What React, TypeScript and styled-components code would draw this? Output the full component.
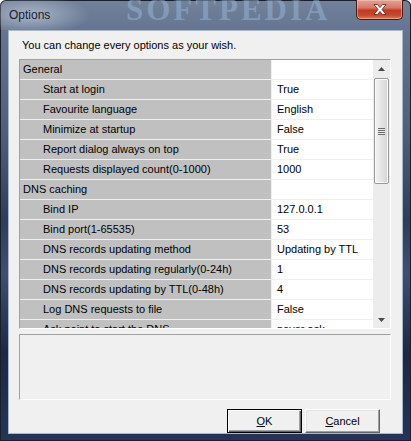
import React from "react";
import styled, { createGlobalStyle } from "styled-components";

type Opt = {
  name: string;
  value?: string;
  group?: boolean;
};

const options: Opt[] = [
  { name: "General", group: true },
  { name: "Start at login", value: "True" },
  { name: "Favourite language", value: "English" },
  { name: "Minimize at startup", value: "False" },
  { name: "Report dialog always on top", value: "True" },
  { name: "Requests displayed count(0-1000)", value: "1000" },
  { name: "DNS caching", group: true },
  { name: "Bind IP", value: "127.0.0.1" },
  { name: "Bind port(1-65535)", value: "53" },
  { name: "DNS records updating method", value: "Updating by TTL" },
  { name: "DNS records updating regularly(0-24h)", value: "1" },
  { name: "DNS records updating by TTL(0-48h)", value: "4" },
  { name: "Log DNS requests to file", value: "False" },
  { name: "Ask point to start the DNS", value: "never ask" },
];

const GlobalStyle = createGlobalStyle`
  html, body {
    margin: 0;
    padding: 0;
    background: #ffffff;
  }
  body {
    font-family: "Liberation Sans", Arial, sans-serif;
    font-size: 11px;
    color: #000;
  }
`;

const Window = styled.div`
  width: 411px;
  height: 441px;
  box-sizing: border-box;
  display: flex;
  flex-direction: column;
  border-radius: 6px 6px 0 0;
  overflow: hidden;
  background: linear-gradient(
    180deg,
    #72829a 0%,
    #637390 8%,
    #4f5f7b 30%,
    #2e3d5c 50%,
    #3d4f73 62%,
    #1c2846 80%,
    #24345a 100%
  );
  box-shadow: inset 0 0 0 1px #1a1f2a;
`;

const TitleBar = styled.div`
  position: relative;
  height: 30px;
  flex: none;
  display: flex;
  justify-content: space-between;
  align-items: flex-start;
  padding: 0 8px 0 9px;
  background: radial-gradient(
    ellipse 60px 20px at 30px 15px,
    rgba(220, 228, 240, 0.55),
    rgba(220, 228, 240, 0) 100%
  );
`;

const Title = styled.span`
  margin-top: 8px;
  font-size: 12px;
  line-height: 14px;
  color: #16202e;
`;

const Watermark = styled.span`
  position: absolute;
  left: 126px;
  top: -8px;
  font-family: "Liberation Serif", serif;
  font-weight: bold;
  font-size: 31px;
  letter-spacing: 3px;
  color: rgba(150, 180, 215, 0.55);
  pointer-events: none;
`;

const CloseButton = styled.div`
  width: 47px;
  height: 20px;
  box-sizing: border-box;
  display: flex;
  align-items: center;
  justify-content: center;
  border: 1px solid #4a1a14;
  border-top: none;
  border-radius: 0 0 5px 5px;
  background: linear-gradient(
    180deg,
    #e3a394 0%,
    #d67a68 40%,
    #c2391f 55%,
    #c44a2c 80%,
    #e07a50 100%
  );
  box-shadow: inset 0 0 0 1px rgba(255, 210, 200, 0.45);
`;

const Client = styled.div`
  flex: 1;
  margin: 0 8px 8px 8px;
  box-sizing: border-box;
  background: #f0f0f0;
  border: 1px solid #aab6c6;
  padding: 0 11px 0 10px;
  display: flex;
  flex-direction: column;
`;

const Intro = styled.div`
  padding-top: 7px;
  line-height: 14px;
  margin-left: 3px;
  margin-bottom: 7px;
`;

const Grid = styled.div`
  height: 270px;
  flex: none;
  box-sizing: border-box;
  border-style: solid;
  border-width: 1px;
  border-color: #a0a0a0 #ffffff #ffffff #a0a0a0;
  display: flex;
  background: #ffffff;
`;

const Rows = styled.div`
  flex: 1;
  overflow: hidden;
`;

const Row = styled.div`
  display: flex;
  height: 20px;
`;

const NameCell = styled.div<{ $group?: boolean }>`
  width: 252px;
  flex: none;
  box-sizing: border-box;
  background: #c0c0c0;
  border-bottom: 1px solid #f0f0f0;
  border-right: 1px solid #f0f0f0;
  padding-left: ${(p) => (p.$group ? "3px" : "23px")};
  line-height: 19px;
  white-space: nowrap;
  overflow: hidden;
`;

const ValueCell = styled.div`
  flex: 1;
  box-sizing: border-box;
  background: #ffffff;
  border-bottom: 1px solid #f0f0f0;
  padding-left: 5px;
  line-height: 19px;
  white-space: nowrap;
  overflow: hidden;
`;

const ScrollBar = styled.div`
  width: 17px;
  flex: none;
  background: #ececec;
  display: flex;
  flex-direction: column;
  align-items: center;
`;

const Arrow = styled.div`
  width: 17px;
  height: 17px;
  flex: none;
  display: flex;
  align-items: center;
  justify-content: center;
`;

const Track = styled.div`
  flex: 1;
  width: 15px;
  display: flex;
  flex-direction: column;
`;

const Thumb = styled.div`
  height: 106px;
  margin-top: 1px;
  box-sizing: border-box;
  border: 1px solid #999999;
  border-radius: 2px;
  background: linear-gradient(90deg, #f3f3f3 0%, #e6e6e6 45%, #d4d4d4 100%);
  box-shadow: inset 0 0 0 1px #fafafa;
  display: flex;
  align-items: center;
  justify-content: center;
`;

const Grip = styled.div`
  width: 7px;
  height: 7px;
  background: repeating-linear-gradient(
    180deg,
    #6c6c6c 0px,
    #6c6c6c 1px,
    #e8e8e8 1px,
    #e8e8e8 2px
  );
`;

const Description = styled.div`
  height: 66px;
  flex: none;
  margin-top: 5px;
  box-sizing: border-box;
  border-style: solid;
  border-width: 1px;
  border-color: #a0a0a0 #ffffff #ffffff #a0a0a0;
  background: #f0f0f0;
`;

const ButtonRow = styled.div`
  display: flex;
  justify-content: flex-end;
  gap: 3px;
  margin-top: 9px;
  padding-right: 11px;
`;

const Button = styled.button<{ $default?: boolean }>`
  width: 75px;
  height: 24px;
  box-sizing: border-box;
  padding: 0;
  font-family: "Liberation Sans", Arial, sans-serif;
  font-size: 11px;
  color: #000;
  background: #f0f0f0;
  border-style: solid;
  border-width: 1px;
  border-color: ${(p) =>
    p.$default ? "#000000" : "#ffffff #646464 #646464 #ffffff"};
  box-shadow: ${(p) =>
    p.$default
      ? "inset 1px 1px #ffffff, inset -1px -1px #646464, inset -2px -2px #a0a0a0"
      : "inset -1px -1px #a0a0a0, inset 1px 1px #e3e3e3"};
  u {
    text-decoration: underline;
  }
`;

const UpIcon = () => (
  <svg width="7" height="4" viewBox="0 0 7 4">
    <path d="M3.5 0 L7 4 L0 4 Z" fill="#4a4a4a" />
  </svg>
);

const DownIcon = () => (
  <svg width="7" height="4" viewBox="0 0 7 4">
    <path d="M0 0 L7 0 L3.5 4 Z" fill="#4a4a4a" />
  </svg>
);

const CloseIcon = () => (
  <svg width="14" height="11" viewBox="0 0 14 11">
    <path
      d="M1 0.5 L4.5 0.5 L7 3.5 L9.5 0.5 L13 0.5 L9 5.5 L13 10.5 L9.5 10.5 L7 7.5 L4.5 10.5 L1 10.5 L5 5.5 Z"
      fill="#ffffff"
      stroke="#5a1a10"
      strokeWidth="0.8"
    />
  </svg>
);

export default function App() {
  return (
    <>
      <GlobalStyle />
      <Window>
        <TitleBar>
          <Watermark>SOFTPEDIA</Watermark>
          <Title>Options</Title>
          <CloseButton>
            <CloseIcon />
          </CloseButton>
        </TitleBar>
        <Client>
          <Intro>You can change every options as your wish.</Intro>
          <Grid>
            <Rows>
              {options.map((o) => (
                <Row key={o.name}>
                  <NameCell $group={o.group}>{o.name}</NameCell>
                  <ValueCell>{o.value}</ValueCell>
                </Row>
              ))}
            </Rows>
            <ScrollBar>
              <Arrow>
                <UpIcon />
              </Arrow>
              <Track>
                <Thumb>
                  <Grip />
                </Thumb>
              </Track>
              <Arrow>
                <DownIcon />
              </Arrow>
            </ScrollBar>
          </Grid>
          <Description />
          <ButtonRow>
            <Button $default>
              <u>O</u>K
            </Button>
            <Button>
              <u>C</u>ancel
            </Button>
          </ButtonRow>
        </Client>
      </Window>
    </>
  );
}
